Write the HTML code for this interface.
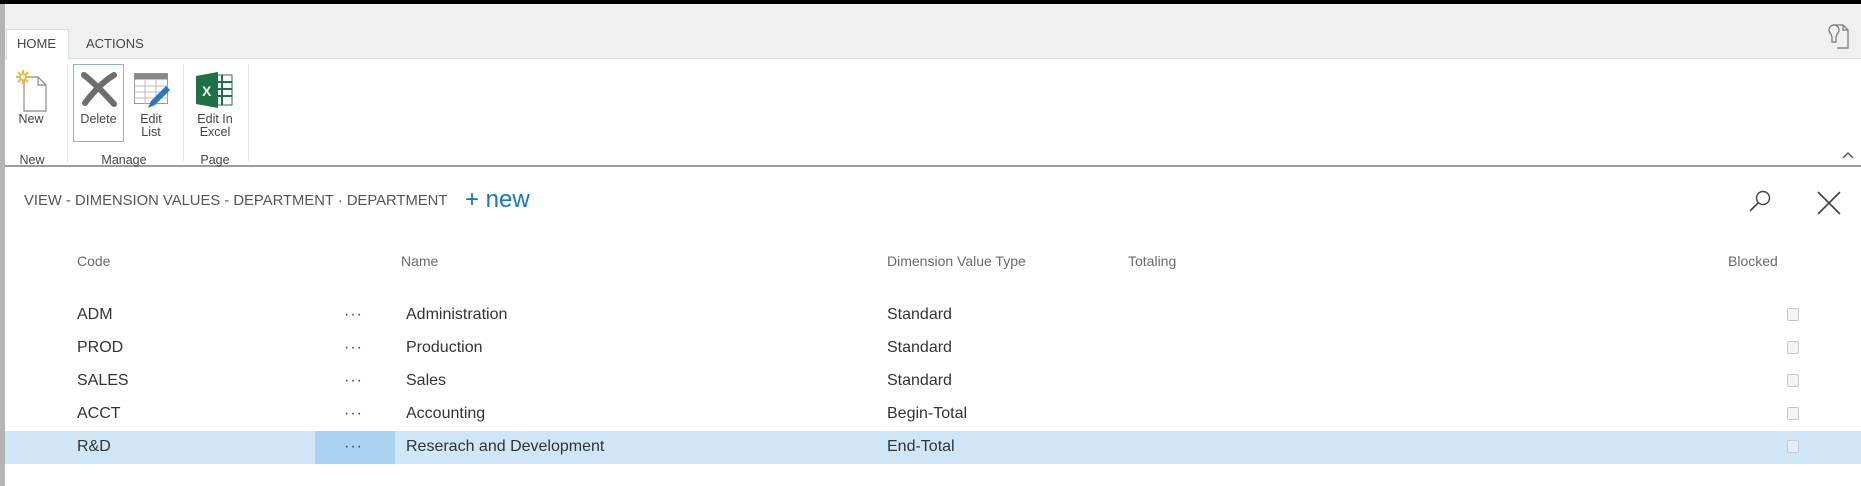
<!DOCTYPE html>
<html><head><meta charset="utf-8"><style>
*{margin:0;padding:0;box-sizing:border-box}
body{width:1861px;height:486px;overflow:hidden;background:#fff;font-family:"Liberation Sans",sans-serif;position:relative;color:#333}
.a{position:absolute;white-space:nowrap}
.lbl{font-size:12.5px;color:#444;text-align:center;line-height:13px}
.hd{font-size:14px;color:#6a6a6a;top:253px}
.r{font-size:16px;color:#333}
.cb{position:absolute;left:1787px;width:12px;height:13px;border:1px solid #c8c8c8;border-radius:2px;background:#f4f4f4}
.dots{position:absolute;left:344px;font-size:16px;color:#444;letter-spacing:1px}
</style></head><body>
<div class="a" style="left:0;top:0;width:1861px;height:4px;background:#000"></div>
<div class="a" style="left:0;top:4px;width:1861px;height:55px;background:#f0f0f0;border-bottom:1px solid #d6dde3"></div>
<div class="a" style="left:0;top:4px;width:5px;height:482px;background:#b4b4b4"></div>
<div class="a" style="left:6px;top:29px;width:63px;height:31px;background:#fff;border:1px solid #d6dde3;border-bottom:none"></div>
<div class="a" style="left:17px;top:36px;font-size:13px;color:#444">HOME</div>
<div class="a" style="left:86px;top:36px;font-size:13px;color:#444">ACTIONS</div>
<svg class="a" style="left:1823px;top:22px" width="30" height="30" viewBox="0 0 30 30" fill="none" stroke="#777" stroke-width="1.2"><path d="M10 3h10l5 5v18h-11"/><path d="M20 3v5h5"/><path d="M8 12a5 5 0 1 1 6 0l-1 3v5h-4v-5z"/></svg>
<div class="a" style="left:5px;top:60px;width:1856px;height:107px;background:#fff;border-bottom:2px solid #9a9a9a"></div>
<svg class="a" style="left:14px;top:68px" width="36" height="44" viewBox="0 0 36 44"><path d="M10 9h14l8 8v26h-22z" fill="#fff" stroke="#888" stroke-width="1.2"/><path d="M24 9v8h8" fill="none" stroke="#888" stroke-width="1.2"/><g stroke="#f2b63c" stroke-width="2"><path d="M9 2v14M2 9h14M4 4l10 10M14 4l-10 10"/></g><circle cx="9" cy="9" r="3" fill="#fff" stroke="#f2b63c" stroke-width="1.5"/></svg>
<div class="a lbl" style="left:14px;top:113px;width:34px">New</div>
<div class="a" style="left:67px;top:64px;width:1px;height:98px;background:#e4e4e4"></div>
<div class="a" style="left:73px;top:64px;width:51px;height:78px;border:1px solid #8fb4d0"></div>
<svg class="a" style="left:80px;top:71px" width="38" height="36" viewBox="0 0 38 36"><path d="M4 4 C14 12 24 22 34 33" stroke="#6e6e6e" stroke-width="6" fill="none" stroke-linecap="round"/><path d="M34 4 C24 10 14 20 5 32" stroke="#6e6e6e" stroke-width="6" fill="none" stroke-linecap="round"/></svg>
<div class="a lbl" style="left:73px;top:113px;width:51px">Delete</div>
<svg class="a" style="left:134px;top:73px" width="38" height="38" viewBox="0 0 38 38"><rect x="0.5" y="0.5" width="33" height="30" fill="#fff" stroke="#999"/><rect x="0.5" y="0.5" width="33" height="6" fill="#888"/><path d="M0 13h34M0 19h34M0 25h34M11 7v24M22 7v24" stroke="#bbb"/><path d="M14 35l3-7 15-15 4 4-15 15z" fill="#2e75c0"/></svg>
<div class="a lbl" style="left:131px;top:113px;width:40px">Edit<br>List</div>
<div class="a" style="left:183px;top:64px;width:1px;height:98px;background:#e4e4e4"></div>
<svg class="a" style="left:196px;top:71px" width="38" height="38" viewBox="0 0 38 38"><rect x="17" y="4" width="19" height="30" fill="#fff" stroke="#1e7145"/><path d="M17 11h19M17 18h19M17 25h19M26 4v30" stroke="#1e7145" stroke-width="2"/><path d="M0 5l22-4v36l-22-4z" fill="#1e7145"/><text x="6" y="25" font-family="Liberation Sans" font-weight="bold" font-size="14" fill="#fff">X</text></svg>
<div class="a lbl" style="left:190px;top:113px;width:50px">Edit In<br>Excel</div>
<div class="a" style="left:248px;top:64px;width:1px;height:98px;background:#e4e4e4"></div>
<div class="a lbl" style="left:15px;top:154px;width:34px">New</div>
<div class="a lbl" style="left:84px;top:154px;width:80px">Manage</div>
<div class="a lbl" style="left:192px;top:154px;width:46px">Page</div>
<svg class="a" style="left:1841px;top:150px" width="14" height="10" viewBox="0 0 14 10"><path d="M2 8l5-5 5 5" stroke="#555" stroke-width="1.4" fill="none"/></svg>
<div class="a" style="left:24px;top:193px;font-size:14.8px;color:#555">VIEW - DIMENSION VALUES - DEPARTMENT · DEPARTMENT</div>
<div class="a" style="left:465px;top:186px;font-size:24px;color:#1377c9">+ new</div>
<svg class="a" style="left:1747px;top:189px" width="26" height="26" viewBox="0 0 26 26"><circle cx="16" cy="9" r="6.5" fill="none" stroke="#444" stroke-width="1.4"/><path d="M11 14L3 22" stroke="#444" stroke-width="1.6"/></svg>
<svg class="a" style="left:1816px;top:190px" width="26" height="26" viewBox="0 0 26 26"><path d="M2 2l22 22M24 2L2 24" stroke="#444" stroke-width="1.6"/></svg>
<div class="a hd" style="left:77px">Code</div>
<div class="a hd" style="left:401px">Name</div>
<div class="a hd" style="left:887px">Dimension Value Type</div>
<div class="a hd" style="left:1128px">Totaling</div>
<div class="a hd" style="left:1728px">Blocked</div>
<div class="a" style="left:5px;top:431px;width:1856px;height:33px;background:#cfe6f7"></div>
<div class="a" style="left:315px;top:431px;width:80px;height:33px;background:#a9d3f0"></div>

<div class="a r" style="left:77px;top:306px">ADM</div><div class="dots" style="top:306px">···</div><div class="a r" style="left:406px;top:306px">Administration</div><div class="a r" style="left:887px;top:306px">Standard</div><div class="cb" style="top:308px"></div>
<div class="a r" style="left:77px;top:339px">PROD</div><div class="dots" style="top:339px">···</div><div class="a r" style="left:406px;top:339px">Production</div><div class="a r" style="left:887px;top:339px">Standard</div><div class="cb" style="top:341px"></div>
<div class="a r" style="left:77px;top:372px">SALES</div><div class="dots" style="top:372px">···</div><div class="a r" style="left:406px;top:372px">Sales</div><div class="a r" style="left:887px;top:372px">Standard</div><div class="cb" style="top:374px"></div>
<div class="a r" style="left:77px;top:405px">ACCT</div><div class="dots" style="top:405px">···</div><div class="a r" style="left:406px;top:405px">Accounting</div><div class="a r" style="left:887px;top:405px">Begin-Total</div><div class="cb" style="top:407px"></div>
<div class="a r" style="left:77px;top:438px">R&amp;D</div><div class="dots" style="top:438px">···</div><div class="a r" style="left:406px;top:438px">Reserach and Development</div><div class="a r" style="left:887px;top:438px">End-Total</div><div class="cb" style="top:440px;background:#e4eef6;border-color:#c2ccd6"></div>
</body></html>
